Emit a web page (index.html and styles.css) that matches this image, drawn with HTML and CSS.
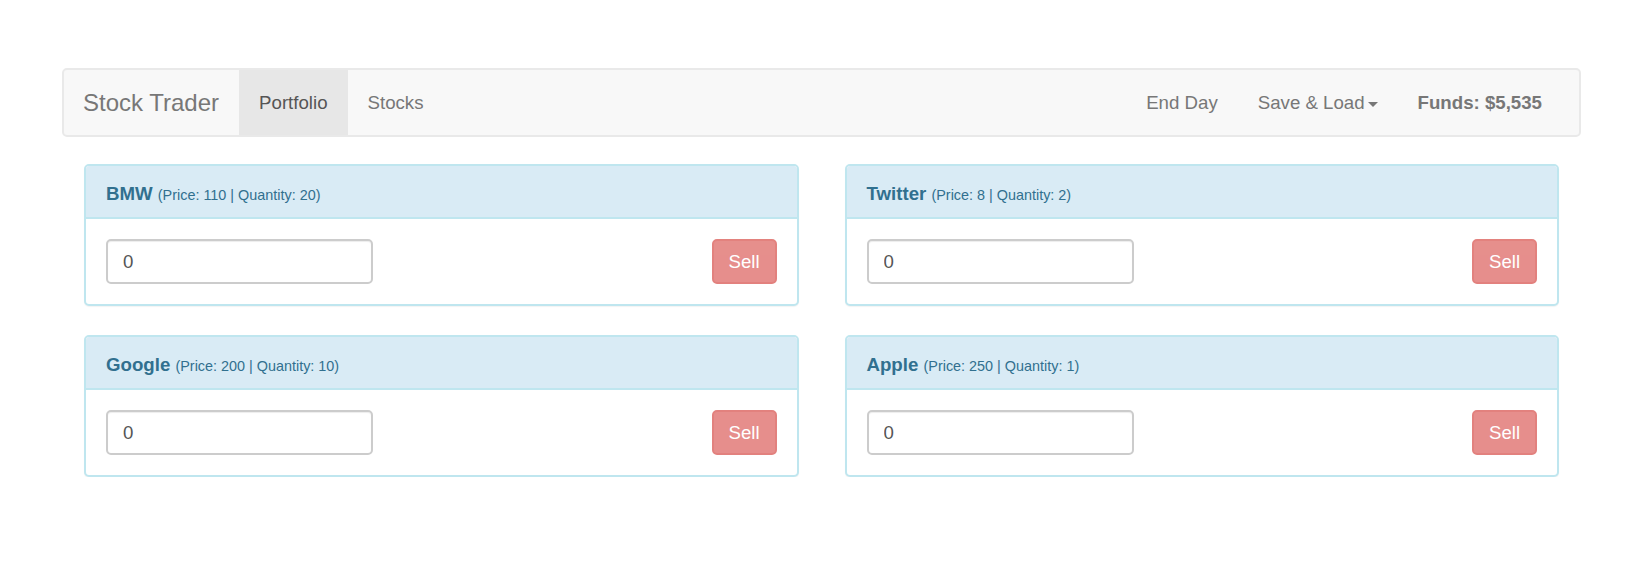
FILE: index.html
```html
<!DOCTYPE html>
<html>
<head>
<meta charset="utf-8">
<title>Stock Trader</title>
<link rel="stylesheet" href="styles.css">
</head>
<body>
<div class="page">
  <nav class="navbar">
    <a class="brand">Stock Trader</a>
    <ul class="nav">
      <li class="active"><a>Portfolio</a></li>
      <li><a>Stocks</a></li>
    </ul>
    <ul class="nav nav-right">
      <li><a>End Day</a></li>
      <li><a>Save &amp; Load<span class="caret"></span></a></li>
    </ul>
    <strong class="funds">Funds: $5,535</strong>
  </nav>

  <div class="grid">
    <div class="panel">
      <div class="panel-heading"><span class="title">BMW</span> <small>(Price: 110 | Quantity: 20)</small></div>
      <div class="panel-body">
        <input class="qty" type="text" value="0">
        <button class="btn-sell" disabled>Sell</button>
      </div>
    </div>
    <div class="panel">
      <div class="panel-heading"><span class="title">Twitter</span> <small>(Price: 8 | Quantity: 2)</small></div>
      <div class="panel-body">
        <input class="qty" type="text" value="0">
        <button class="btn-sell" disabled>Sell</button>
      </div>
    </div>
    <div class="panel">
      <div class="panel-heading"><span class="title">Google</span> <small>(Price: 200 | Quantity: 10)</small></div>
      <div class="panel-body">
        <input class="qty" type="text" value="0">
        <button class="btn-sell" disabled>Sell</button>
      </div>
    </div>
    <div class="panel">
      <div class="panel-heading"><span class="title">Apple</span> <small>(Price: 250 | Quantity: 1)</small></div>
      <div class="panel-body">
        <input class="qty" type="text" value="0">
        <button class="btn-sell" disabled>Sell</button>
      </div>
    </div>
  </div>
</div>
</body>
</html>
```

FILE: styles.css
```css
html, body {
  margin: 0;
  padding: 0;
  background: #fff;
}

body {
  font-family: "Liberation Sans", Arial, Helvetica, sans-serif;
  font-size: 18.67px;
  color: #333;
}

.page {
  padding-top: 68px;
}

/* Navbar */
.navbar {
  display: flex;
  align-items: stretch;
  height: 69px;
  box-sizing: border-box;
  margin: 0 61px 0 62px;
  padding-right: 17px;
  background: #f8f8f8;
  border: 2px solid #e9e9e9;
  border-radius: 5px;
}

.brand {
  display: block;
  padding: 0 20px 0 19px;
  font-size: 24px;
  line-height: 65px;
  color: #777;
}

.nav {
  display: flex;
  margin: 0;
  padding: 0;
  list-style: none;
}

.nav li a {
  display: block;
  padding: 0 20px;
  line-height: 65px;
  color: #777;
}

.nav li.active a {
  background: #e7e7e7;
  color: #555;
}

.nav-right {
  margin-left: auto;
}

.caret {
  display: inline-block;
  width: 0;
  height: 0;
  margin-left: 3px;
  vertical-align: middle;
  border-top: 5px solid #777;
  border-left: 5px solid transparent;
  border-right: 5px solid transparent;
}

.funds {
  margin: 0 20px;
  line-height: 65px;
  color: #777;
  font-weight: bold;
}

/* Panels */
.grid {
  display: grid;
  grid-template-columns: 1fr 1fr;
  column-gap: 46px;
  row-gap: 29px;
  padding: 27px 83px 0 84px;
}

.panel {
  background: #fff;
  border: 2px solid #bfe6ef;
  border-radius: 5px;
  box-shadow: 0 1px 1px rgba(0, 0, 0, 0.05);
  overflow: hidden;
}

.panel-heading {
  padding: 16px 20px 10px;
  line-height: 24px;
  background: #d9ebf5;
  color: #31708f;
  border-bottom: 2px solid #bfe6ef;
}

.title {
  font-weight: bold;
  font-size: 18.67px;
}

.panel-heading small {
  font-size: 14.4px;
}

.panel-body {
  display: flex;
  justify-content: space-between;
  align-items: center;
  padding: 20px;
}

.qty {
  width: 267px;
  height: 45px;
  box-sizing: border-box;
  margin: 0;
  padding: 0 16px 0 15px;
  border: 2px solid #ccc;
  border-radius: 5px;
  box-shadow: inset 0 1px 1px rgba(0, 0, 0, 0.075);
  font-family: inherit;
  font-size: 18.67px;
  color: #555;
  background: #fff;
  outline: none;
}

.btn-sell {
  width: 65px;
  height: 45px;
  box-sizing: border-box;
  margin: 0;
  padding: 0;
  border: 2px solid #d43f3a;
  border-radius: 5px;
  background: #d9534f;
  color: #fff;
  font-family: inherit;
  font-size: 18.67px;
  opacity: 0.65;
}
```
